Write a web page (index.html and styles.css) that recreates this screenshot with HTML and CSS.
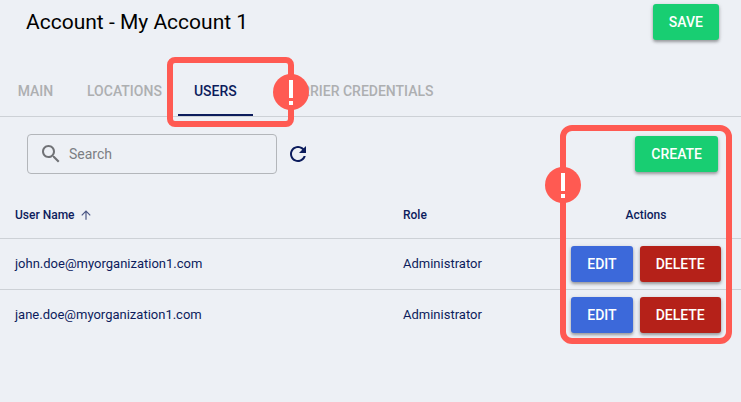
FILE: index.html
```html
<!DOCTYPE html>
<html lang="en">
<head>
    <meta charset="UTF-8">
    <meta name="viewport" content="width=device-width, initial-scale=1.0">
    <title>Account - My Account 1</title>
    <link rel="stylesheet" href="styles.css">
</head>

<body>

    <header class="page-header">
        <h1>Account - My Account 1</h1>
        <button type="button" class="btn btn-green">SAVE</button>
    </header>

    <nav class="tabs">
        <a href="#main" class="tab">MAIN</a>
        <a href="#locations" class="tab">LOCATIONS</a>
        <div class="tab-slot">
            <a href="#users" class="tab active" aria-current="page">USERS</a>
            <div class="callout callout-tab">
                <svg class="callout-mark" viewBox="0 0 36 36" aria-hidden="true">
                    <circle cx="18" cy="18" r="18" fill="#ff5a52"/>
                    <path d="M16 6h4v18h-4zM16 27h4v4h-4z" fill="#fff"/>
                </svg>
            </div>
        </div>
        <a href="#carriers" class="tab">CARRIER CREDENTIALS</a>
    </nav>

    <main class="users">
        <div class="toolbar">
            <label class="search">
                <svg viewBox="0 0 24 24" aria-hidden="true">
                    <path d="M15.5 14h-.79l-.28-.27C15.41 12.59 16 11.11 16 9.5 16 5.91 13.09 3 9.5 3S3 5.91 3 9.5 5.91 16 9.5 16c1.61 0 3.09-.59 4.23-1.57l.27.28v.79l5 4.99L20.49 19l-4.99-5zm-6 0C7.01 14 5 11.99 5 9.5S7.01 5 9.5 5 14 7.01 14 9.5 11.99 14 9.5 14z"/>
                </svg>
                <input type="text" placeholder="Search" aria-label="Search">
            </label>
            <button type="button" class="refresh" aria-label="Refresh">
                <svg viewBox="0 0 24 24" aria-hidden="true">
                    <path d="M17.65 6.35C16.2 4.9 14.21 4 12 4c-4.42 0-7.99 3.58-7.99 8s3.57 8 7.99 8c3.73 0 6.84-2.55 7.73-6h-2.08c-.82 2.33-3.04 4-5.65 4-3.31 0-6-2.69-6-6s2.69-6 6-6c1.66 0 3.14.69 4.22 1.78L13 11h7V4l-2.35 2.35z"/>
                </svg>
            </button>
            <button type="button" class="btn btn-green create">CREATE</button>
        </div>

        <table>
            <thead>
                <tr>
                    <th class="col-name">
                        <span class="sort-label">User Name
                            <svg viewBox="0 0 24 24" aria-hidden="true">
                                <path d="M4 12l1.41 1.41L11 7.83V20h2V7.83l5.58 5.59L20 12l-8-8-8 8z"/>
                            </svg>
                        </span>
                    </th>
                    <th class="col-role">Role</th>
                    <th class="col-actions">Actions</th>
                </tr>
            </thead>
            <tbody>
                <tr>
                    <td>john.doe@myorganization1.com</td>
                    <td>Administrator</td>
                    <td>
                        <div class="actions">
                            <button type="button" class="btn btn-blue">EDIT</button>
                            <button type="button" class="btn btn-red">DELETE</button>
                        </div>
                    </td>
                </tr>
                <tr>
                    <td>jane.doe@myorganization1.com</td>
                    <td>Administrator</td>
                    <td>
                        <div class="actions">
                            <button type="button" class="btn btn-blue">EDIT</button>
                            <button type="button" class="btn btn-red">DELETE</button>
                        </div>
                    </td>
                </tr>
            </tbody>
        </table>

        <div class="callout callout-actions">
            <svg class="callout-mark" viewBox="0 0 36 36" aria-hidden="true">
                <circle cx="18" cy="18" r="18" fill="#ff5a52"/>
                <path d="M16 6h4v18h-4zM16 27h4v4h-4z" fill="#fff"/>
            </svg>
        </div>
    </main>

</body>
</html>
```

FILE: styles.css
```css
* {
    box-sizing: border-box;
}

body {
    min-height: 100vh;
    margin: 0;
    background-color: #edf0f5;
    color: #0c1c5c;
    font-family: Roboto, "Liberation Sans", sans-serif;
    font-size: 13px;
    line-height: 18px;
}

/* Title bar */
.page-header {
    display: flex;
    justify-content: space-between;
    align-items: center;
    padding: 4px 22px 4px 26px;
}

    .page-header h1 {
        margin: 0;
        font-size: 21px;
        font-weight: 400;
        line-height: 32px;
        color: #000;
    }

/* Buttons */
.btn {
    height: 36px;
    padding: 0 16px;
    border: none;
    border-radius: 3px;
    color: #fff;
    font-family: inherit;
    font-size: 14px;
    font-weight: 500;
    line-height: 24px;
    cursor: pointer;
    box-shadow: 0 2px 3px rgba(0, 0, 0, 0.3), 0 1px 5px rgba(0, 0, 0, 0.12);
}

.btn-green {
    background-color: #18ce72;
}

.btn-blue {
    background-color: #3c69da;
}

.btn-red {
    background-color: #b52119;
}

/* Tabs */
.tabs {
    display: flex;
    margin-top: 24px;
    border-bottom: 1px solid #cdd1d6;
}

.tab {
    display: block;
    min-width: 71px;
    padding: 0 16px;
    border-bottom: 2px solid transparent;
    color: #adafb1;
    font-size: 14px;
    font-weight: 500;
    line-height: 46px;
    text-align: center;
    text-decoration: none;
    white-space: nowrap;
}

    .tab.active {
        color: #0c1c5c;
        border-bottom-color: #0c1c5c;
    }

.tab-slot {
    position: relative;
    margin-right: 14px;
}

/* Search and create */
.toolbar {
    display: flex;
    align-items: center;
    padding: 17px 23px 17px 27px;
}

.search {
    display: flex;
    align-items: center;
    gap: 6px;
    width: 250px;
    height: 40px;
    padding: 0 11px;
    border: 1px solid #b3b6ba;
    border-radius: 4px;
}

    .search svg {
        flex: none;
        width: 24px;
        height: 24px;
        fill: #707276;
    }

    .search input {
        flex: 1;
        min-width: 0;
        height: 18px;
        padding: 0;
        border: none;
        outline: none;
        background: none;
        color: #0c1c5c;
        font-family: inherit;
        font-size: 14px;
    }

    .search input::placeholder {
        color: #7b7e83;
        opacity: 1;
    }

.refresh {
    width: 24px;
    height: 24px;
    margin-left: 9px;
    padding: 0;
    border: none;
    background: none;
    cursor: pointer;
}

    .refresh svg {
        display: block;
        fill: #0c1c5c;
    }

.create {
    margin-left: auto;
}

/* User list */
.users {
    position: relative;
}

table {
    width: 100%;
    table-layout: fixed;
    border-collapse: separate;
    border-spacing: 0;
}

th,
td {
    padding: 0 15px;
    border-bottom: 1px solid #cdd1d6;
    text-align: left;
}

th {
    height: 48px;
    font-size: 12px;
    font-weight: 500;
}

td {
    height: 51px;
}

tbody tr:last-child td {
    border-bottom-color: transparent;
}

.col-role {
    width: 163px;
}

.col-actions {
    width: 190px;
    text-align: center;
}

.sort-label {
    display: flex;
    align-items: center;
    gap: 4px;
}

    .sort-label svg {
        width: 14px;
        height: 14px;
        fill: #4a5583;
    }

.actions {
    display: flex;
    justify-content: center;
    gap: 7px;
}

/* Highlight frames drawn over the page */
.callout {
    position: absolute;
    border: 6px solid #ff5a52;
    pointer-events: none;
}

.callout-mark {
    position: absolute;
    width: 36px;
    height: 36px;
}

.callout-tab {
    top: -11px;
    right: -41px;
    bottom: -11px;
    left: -11px;
    border-radius: 8px;
}

    .callout-tab .callout-mark {
        top: 11px;
        right: -21px;
    }

.callout-actions {
    top: 8px;
    right: 9px;
    bottom: -3px;
    width: 172px;
    border-radius: 12px;
}

    .callout-actions .callout-mark {
        top: 36px;
        left: -21px;
    }
```
